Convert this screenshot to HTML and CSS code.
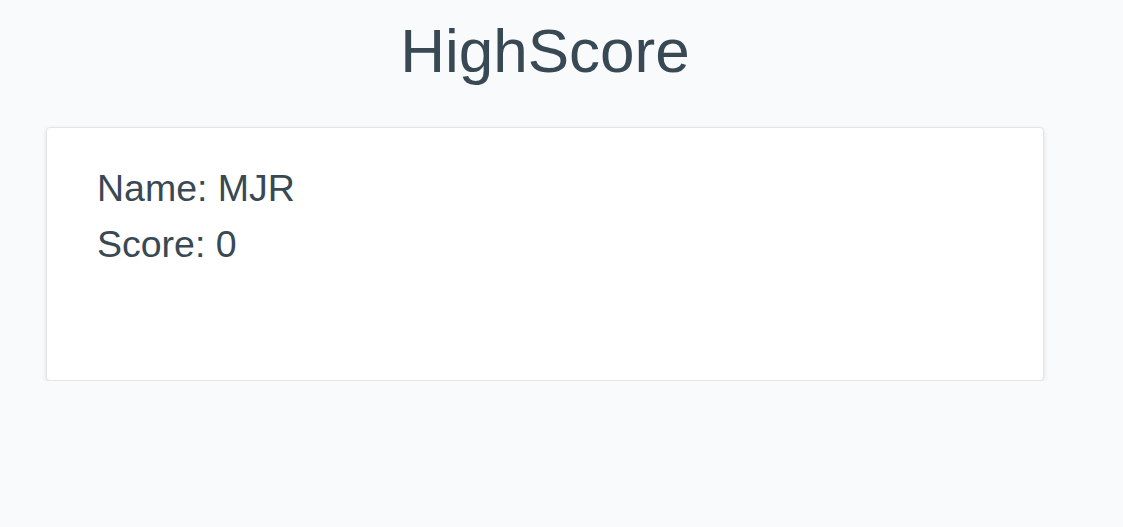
FILE: index.html
```html
<!DOCTYPE html>
<html>
<head>
<meta charset="utf-8">
<link rel="stylesheet" href="styles.css">
</head>
<body>
<div class="page">
  <h1 class="title">HighScore</h1>
  <div class="card">
    <div class="line">Name: MJR</div>
    <div class="line">Score: 0</div>
  </div>
</div>
</body>
</html>
```
FILE: styles.css
```css
html, body {
  margin: 0;
  padding: 0;
  background: #f9fafc;
}
body {
  font-family: "Liberation Sans", Arial, sans-serif;
  color: #384954;
}
.page {
  width: 998px;
  margin-left: 46px;
  padding-top: 15px;
}
.title {
  margin: 0 0 40px 0;
  font-size: 62px;
  font-weight: normal;
  line-height: 72px;
  text-align: center;
}
.card {
  box-sizing: border-box;
  height: 254px;
  background: #fff;
  border: 1px solid #e3e4e6;
  border-radius: 4px;
  box-shadow: 0 2px 5px rgba(0,0,0,0.1);
  padding: 32px 50px;
}
.line {
  font-size: 37.5px;
  line-height: 56px;
}
```
